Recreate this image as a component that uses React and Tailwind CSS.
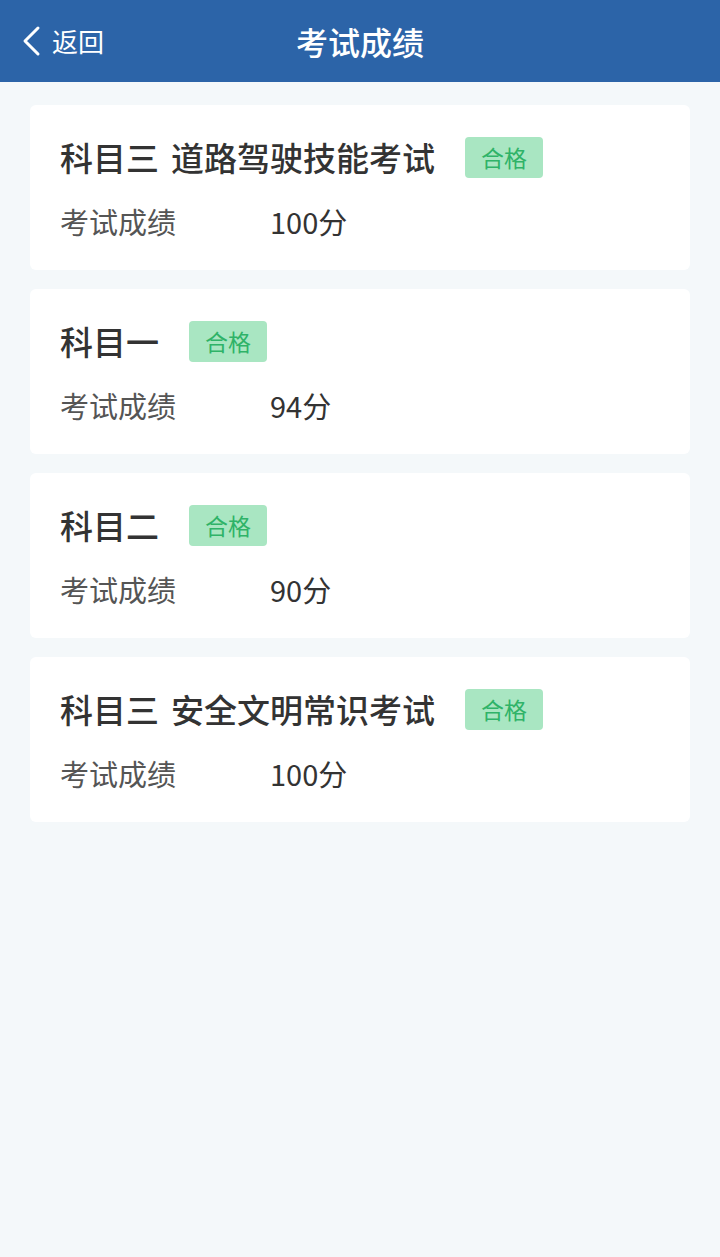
import React from 'react';

const results = [
    { id: 1, name: '科目三 道路驾驶技能考试', score: '100分' },
    { id: 2, name: '科目一', score: '94分' },
    { id: 3, name: '科目二', score: '90分' },
    { id: 4, name: '科目三 安全文明常识考试', score: '100分' },
];

const font = { fontFamily: '"Noto Sans CJK SC", "Noto Sans", sans-serif' };

const ResultCard = ({ item }) => {
    const [main, sub] = item.name.split(' ');
    return (
        <div className="bg-white rounded-md pl-[30px] pr-6 pt-8 pb-[29px]">
            <div className="flex items-center h-[41px]">
                <h2 className="flex text-[33px] leading-[41px] font-medium text-[#333333]">
                    <span>{main}</span>
                    {sub && <span className="ml-[12px]">{sub}</span>}
                </h2>
                <span className="ml-[30px] w-[78px] h-[41px] rounded-[4px] bg-[#a9e6c2] text-[#2fb368] text-[23px] flex items-center justify-center">
                    合格
                </span>
            </div>
            <div className="flex items-center mt-[23px] h-[40px] text-[29px] leading-[40px]">
                <span className="w-[210px] text-[#555555]">考试成绩</span>
                <span className="text-[#333333]">{item.score}</span>
            </div>
        </div>
    );
};

const App = () => {
    return (
        <div className="min-h-[1257px] bg-[#f4f8fa]" style={font}>
            <header className="relative h-[82px] bg-[#2c64a8] flex items-center justify-center">
                <div className="absolute left-[20px] top-0 h-full flex items-center gap-[10px] text-white">
                    <svg width="22" height="32" viewBox="0 0 22 32" fill="none">
                        <path d="M18 3 L5 16 L18 29" stroke="white" strokeWidth="3" strokeLinecap="round" strokeLinejoin="round" />
                    </svg>
                    <span className="text-[26px] leading-none">返回</span>
                </div>
                <h1 className="text-white text-[32px] font-medium">考试成绩</h1>
            </header>

            <div className="px-[30px] pt-[23px] flex flex-col gap-[19px]">
                {results.map(item => (
                    <ResultCard key={item.id} item={item} />
                ))}
            </div>
        </div>
    );
};

export default App;
